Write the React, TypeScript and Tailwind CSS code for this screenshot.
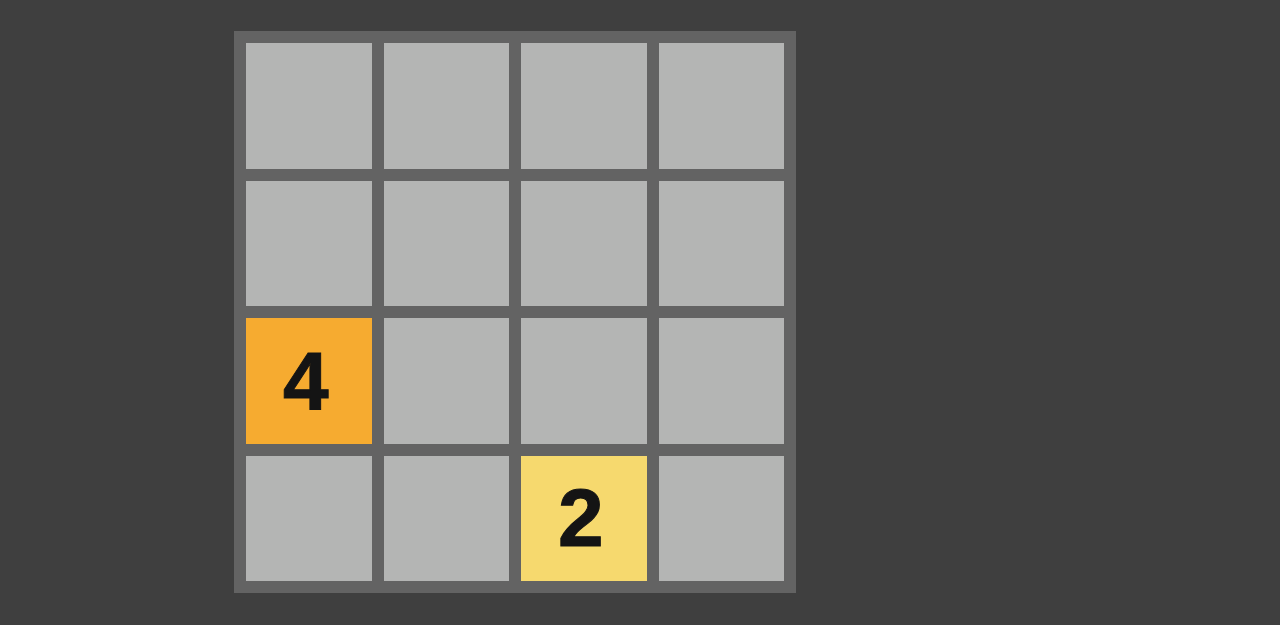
const board: number[][] = [
  [0, 0, 0, 0],
  [0, 0, 0, 0],
  [4, 0, 0, 0],
  [0, 0, 2, 0],
]

const tileColor: Record<number, string> = {
  0: "bg-[#b4b5b4]",
  2: "bg-[#f6d96e]",
  4: "bg-[#f6ab30]",
}

function Tile({ value }: { value: number }) {
  return (
    <div
      className={`flex items-center justify-center ${tileColor[value] ?? "bg-[#b4b5b4]"}`}
    >
      {value > 0 && (
        <span className="mr-[6px] font-['Liberation_Sans',Arial,sans-serif] text-[82px] leading-none font-bold text-[#141414] [-webkit-text-stroke:1px_#141414]">
          {value}
        </span>
      )}
    </div>
  )
}

export default function App() {
  return (
    <div className="h-[625px] w-full bg-[#3f3f3f] pt-[31px] pl-[234px]">
      <div className="grid h-[562px] w-[562px] grid-cols-4 grid-rows-4 gap-[12px] bg-[#636363] p-[12px]">
        {board.flat().map((v, i) => (
          <Tile key={i} value={v} />
        ))}
      </div>
    </div>
  )
}
